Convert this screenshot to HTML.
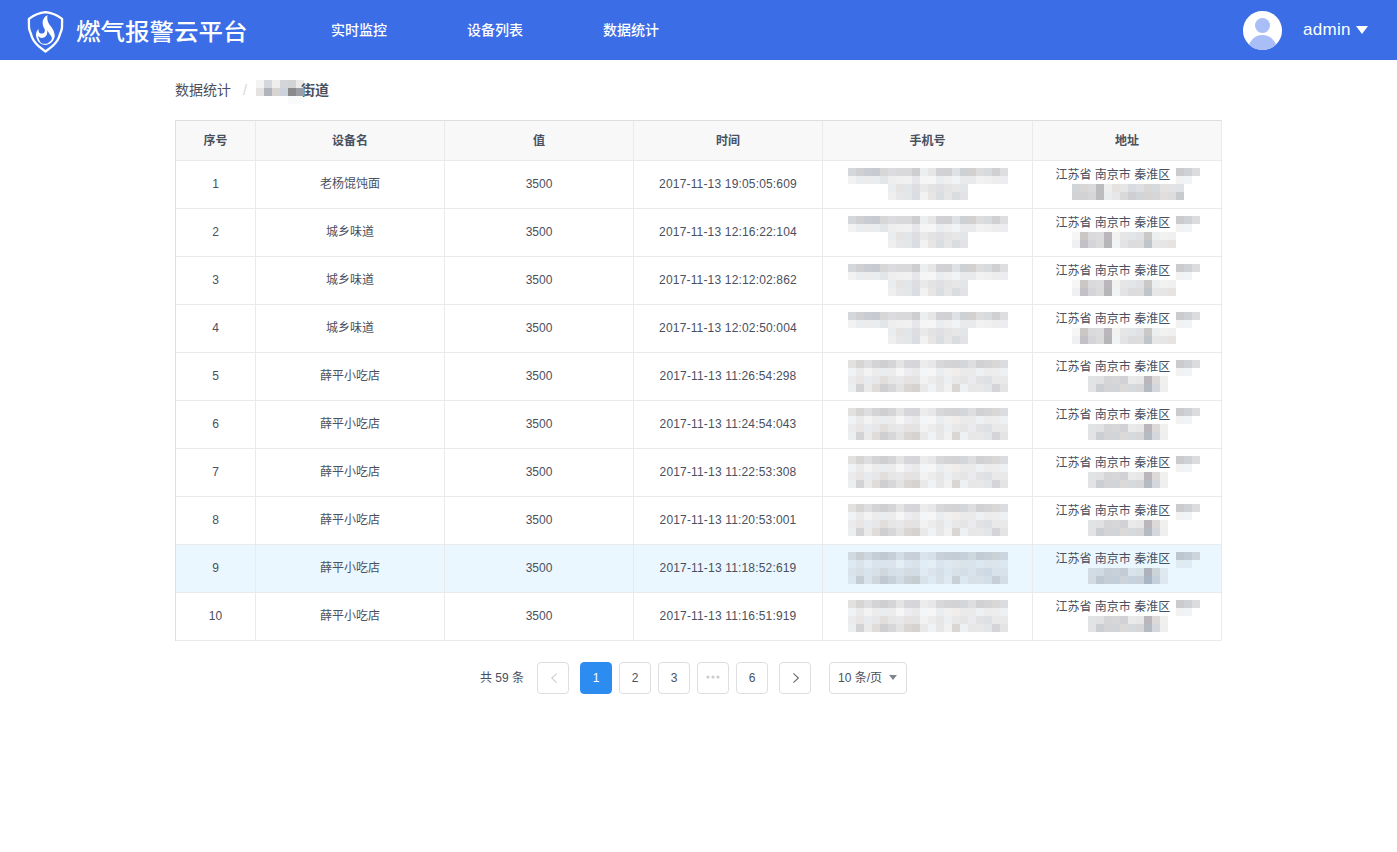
<!DOCTYPE html>
<html lang="zh-CN">
<head>
<meta charset="utf-8">
<title>燃气报警云平台</title>
<style>
*{box-sizing:border-box;margin:0;padding:0}
html,body{width:1397px;height:852px;overflow:hidden;background:#fff}
body{font-family:"Liberation Sans","Noto Sans CJK SC",sans-serif;font-size:12px;color:#495060;position:relative;-webkit-font-smoothing:antialiased}
.hd{position:absolute;left:0;top:0;width:1397px;height:60px;background:#3a6de6}
.logo{position:absolute;left:26px;top:9px;width:40px;height:46px}
.brand{position:absolute;left:76px;top:0;height:60px;line-height:64px;font-size:24.5px;color:#fff;letter-spacing:0;white-space:nowrap;font-weight:500;transform:scaleY(0.94);transform-origin:0 43px}
.nav{position:absolute;top:0;height:60px;line-height:60px;font-size:14px;color:#fff;white-space:nowrap;font-weight:500}
.avatar{position:absolute;left:1243px;top:11.3px;width:38.7px;height:38.5px;border-radius:50%;background:#fff;overflow:hidden}
.avatar i{position:absolute;display:block;background:#a9bdf6;border-radius:50%}
.user{position:absolute;left:1303px;top:0;height:60px;line-height:60px;font-size:17px;color:#fff;letter-spacing:0.3px}
.caret{position:absolute;left:1356px;top:26px;width:0;height:0;border-left:6px solid transparent;border-right:6px solid transparent;border-top:8px solid #fff}
.bc{position:absolute;left:175px;top:80px;height:21px;line-height:21px;font-size:14px;color:#495060;white-space:nowrap}
.bc .sep{color:#d4d6da;margin:0 7px 0 12px}
.bc b{font-weight:700}
.mosaic{position:absolute;left:0;top:0;pointer-events:none}
.mosaic rect{width:8px;height:8px}
.tb{position:absolute;left:175px;top:120px;width:1047px;height:521px;border:1px solid #dddee1;border-right:0;border-bottom:0}
table{border-collapse:separate;border-spacing:0;table-layout:fixed;width:1046px}
th,td{border-right:1px solid #e9eaec;border-bottom:1px solid #e9eaec;text-align:center;vertical-align:middle;font-size:12px;color:#495060;padding:0}
th{height:40px;background:#f8f8f9;font-weight:700;padding-bottom:2px}
td{height:48px;background:#fff;line-height:16px;position:relative;padding-bottom:2px}
tr.hv td{background:#ebf7ff}
.tm{letter-spacing:.17px}
.ad{position:absolute;left:22.5px;top:6px;white-space:nowrap;line-height:16px}
.pg{position:absolute;top:662px;height:32px;line-height:30px;font-size:12px;color:#495060;text-align:center}
.pi{border:1px solid #dddee1;border-radius:4px;background:#fff;width:32px}
.pi.on{background:#2d8cf0;border-color:#2d8cf0;color:#fff}
</style>
</head>
<body>
<div class="hd">
  <svg class="logo" viewBox="0 0 40 46">
    <path d="M19.5 3.2 Q10.6 4.1 2.9 9.8 C2.91 10.58 2.93 12.97 2.95 14.50 C2.98 16.03 2.91 17.75 3.05 19.00 C3.19 20.25 3.49 21.03 3.80 22.00 C4.11 22.97 4.55 23.82 4.90 24.80 C5.25 25.78 5.50 26.88 5.90 27.90 C6.30 28.92 6.72 29.93 7.30 30.90 C7.88 31.87 8.57 32.72 9.40 33.70 C10.23 34.68 11.20 35.77 12.30 36.80 C13.40 37.83 14.80 38.95 16.00 39.90 C17.20 40.85 18.92 42.07 19.50 42.50 C20.08 42.07 21.80 40.85 23.00 39.90 C24.20 38.95 25.60 37.83 26.70 36.80 C27.80 35.77 28.77 34.68 29.60 33.70 C30.43 32.72 31.12 31.87 31.70 30.90 C32.28 29.93 32.70 28.92 33.10 27.90 C33.50 26.88 33.75 25.78 34.10 24.80 C34.45 23.82 34.89 22.97 35.20 22.00 C35.51 21.03 35.81 20.25 35.95 19.00 C36.09 17.75 36.02 16.03 36.05 14.50 C36.07 12.97 36.09 10.58 36.10 9.80 Q28.4 4.1 19.5 3.2 Z" fill="none" stroke="#fff" stroke-width="2.3" stroke-linejoin="round"/>
    <path d="M21.5 6.1 C21.47 6.48 21.28 7.48 21.30 8.40 C21.32 9.32 21.33 10.55 21.60 11.60 C21.87 12.65 22.27 13.63 22.90 14.70 C23.53 15.77 24.67 16.90 25.40 18.00 C26.13 19.10 26.80 20.23 27.30 21.30 C27.80 22.37 28.17 23.35 28.40 24.40 C28.63 25.45 28.88 26.45 28.70 27.60 C28.52 28.75 28.07 30.17 27.30 31.30 C26.53 32.43 25.42 33.63 24.10 34.40 C22.78 35.17 20.92 35.83 19.40 35.90 C17.88 35.97 16.25 35.47 15.00 34.80 C13.75 34.13 12.68 33.02 11.90 31.90 C11.12 30.78 10.61 29.25 10.30 28.10 C9.99 26.95 9.97 25.98 10.05 25.00 C10.13 24.02 10.39 23.03 10.80 22.20 C11.21 21.37 12.22 20.37 12.50 20.00 C12.55 20.48 12.55 22.18 12.80 22.90 C13.05 23.62 13.53 24.02 14.00 24.30 C14.47 24.58 15.05 24.62 15.60 24.60 C16.15 24.58 16.82 24.48 17.30 24.20 C17.78 23.92 18.23 23.38 18.50 22.90 C18.77 22.42 18.92 21.87 18.90 21.30 C18.88 20.73 18.63 20.07 18.40 19.50 C18.17 18.93 17.78 18.70 17.50 17.90 C17.22 17.10 16.80 15.75 16.70 14.70 C16.60 13.65 16.60 12.65 16.90 11.60 C17.20 10.55 17.73 9.32 18.50 8.40 C19.27 7.48 21.00 6.48 21.50 6.10 Z M12.2 27 C12.45 27.22 13.13 27.98 13.70 28.30 C14.27 28.62 14.80 28.92 15.60 28.90 C16.40 28.88 17.65 28.73 18.50 28.20 C19.35 27.67 20.23 26.60 20.70 25.70 C21.17 24.80 21.20 23.55 21.30 22.80 C21.40 22.05 21.30 21.47 21.30 21.20 C21.62 21.73 22.52 23.33 23.20 24.40 C23.88 25.47 25.00 26.58 25.40 27.60 C25.80 28.62 26.15 29.43 25.60 30.50 C25.05 31.57 23.18 33.27 22.10 34.00 C21.02 34.73 20.22 34.85 19.10 34.85 C17.98 34.85 16.35 34.59 15.40 34.00 C14.45 33.41 13.92 32.28 13.40 31.30 C12.88 30.32 12.50 28.82 12.30 28.10 C12.10 27.38 12.22 27.18 12.20 27.00 Z" fill="#fff" fill-rule="evenodd"/>
  </svg>
  <div class="brand">燃气报警云平台</div>
  <div class="nav" style="left:331px">实时监控</div>
  <div class="nav" style="left:467px">设备列表</div>
  <div class="nav" style="left:603px">数据统计</div>
  <div class="avatar"><i style="left:12px;top:6.8px;width:15px;height:15px"></i><i style="left:5px;top:24px;width:29px;height:30px"></i></div>
  <div class="user">admin</div>
  <div class="caret"></div>
</div>

<div class="bc"><span>数据统计</span><span class="sep">/</span><span style="display:inline-block;width:47px"></span><b>街道</b></div>

<div class="tb">
<table>
<colgroup><col style="width:80px"><col style="width:189px"><col style="width:189px"><col style="width:189px"><col style="width:210px"><col style="width:189px"></colgroup>
<thead><tr><th>序号</th><th>设备名</th><th>值</th><th>时间</th><th>手机号</th><th>地址</th></tr></thead>
<tbody>
<tr><td>1</td><td>老杨馄饨面</td><td>3500</td><td class="tm">2017-11-13 19:05:05:609</td><td></td><td><span class="ad">江苏省 南京市 秦淮区</span></td></tr>
<tr><td>2</td><td>城乡味道</td><td>3500</td><td class="tm">2017-11-13 12:16:22:104</td><td></td><td><span class="ad">江苏省 南京市 秦淮区</span></td></tr>
<tr><td>3</td><td>城乡味道</td><td>3500</td><td class="tm">2017-11-13 12:12:02:862</td><td></td><td><span class="ad">江苏省 南京市 秦淮区</span></td></tr>
<tr><td>4</td><td>城乡味道</td><td>3500</td><td class="tm">2017-11-13 12:02:50:004</td><td></td><td><span class="ad">江苏省 南京市 秦淮区</span></td></tr>
<tr><td>5</td><td>薛平小吃店</td><td>3500</td><td class="tm">2017-11-13 11:26:54:298</td><td></td><td><span class="ad">江苏省 南京市 秦淮区</span></td></tr>
<tr><td>6</td><td>薛平小吃店</td><td>3500</td><td class="tm">2017-11-13 11:24:54:043</td><td></td><td><span class="ad">江苏省 南京市 秦淮区</span></td></tr>
<tr><td>7</td><td>薛平小吃店</td><td>3500</td><td class="tm">2017-11-13 11:22:53:308</td><td></td><td><span class="ad">江苏省 南京市 秦淮区</span></td></tr>
<tr><td>8</td><td>薛平小吃店</td><td>3500</td><td class="tm">2017-11-13 11:20:53:001</td><td></td><td><span class="ad">江苏省 南京市 秦淮区</span></td></tr>
<tr class="hv"><td>9</td><td>薛平小吃店</td><td>3500</td><td class="tm">2017-11-13 11:18:52:619</td><td></td><td><span class="ad">江苏省 南京市 秦淮区</span></td></tr>
<tr><td>10</td><td>薛平小吃店</td><td>3500</td><td class="tm">2017-11-13 11:16:51:919</td><td></td><td><span class="ad">江苏省 南京市 秦淮区</span></td></tr>
</tbody>
</table>
</div>

<svg class="mosaic" width="1397" height="852" viewBox="0 0 1397 852" fill="rgb(70,75,92)" shape-rendering="crispEdges"><rect x="848" y="168" fill="#465468" fill-opacity=".23"/><rect x="856" y="168" fill="#505058" fill-opacity=".27"/><rect x="864" y="168" fill="#465468" fill-opacity=".29"/><rect x="872" y="168" fill="#465468" fill-opacity=".30"/><rect x="880" y="168" fill="#505058" fill-opacity=".23"/><rect x="888" y="168" fill="#505058" fill-opacity=".20"/><rect x="896" y="168" fill="#54545c" fill-opacity=".22"/><rect x="904" y="168" fill="#54545c" fill-opacity=".22"/><rect x="912" y="168" fill="#505058" fill-opacity=".28"/><rect x="920" y="168" fill="#465468" fill-opacity=".10"/><rect x="928" y="168" fill="#585460" fill-opacity=".15"/><rect x="936" y="168" fill="#505058" fill-opacity=".26"/><rect x="944" y="168" fill="#54545c" fill-opacity=".27"/><rect x="952" y="168" fill="#4a4f5e" fill-opacity=".17"/><rect x="960" y="168" fill="#465468" fill-opacity=".27"/><rect x="968" y="168" fill="#5e5652" fill-opacity=".27"/><rect x="976" y="168" fill="#54545c" fill-opacity=".20"/><rect x="984" y="168" fill="#4a4f5e" fill-opacity=".21"/><rect x="992" y="168" fill="#505058" fill-opacity=".27"/><rect x="1000" y="168" fill="#585460" fill-opacity=".20"/><rect x="848" y="176" fill="#585460" fill-opacity=".08"/><rect x="856" y="176" fill="#4a4f5e" fill-opacity=".11"/><rect x="864" y="176" fill="#505058" fill-opacity=".11"/><rect x="872" y="176" fill="#465468" fill-opacity=".11"/><rect x="880" y="176" fill="#465468" fill-opacity=".15"/><rect x="888" y="176" fill="#585460" fill-opacity=".10"/><rect x="896" y="176" fill="#585460" fill-opacity=".09"/><rect x="904" y="176" fill="#505058" fill-opacity=".08"/><rect x="912" y="176" fill="#585460" fill-opacity=".14"/><rect x="920" y="176" fill="#54545c" fill-opacity=".06"/><rect x="928" y="176" fill="#505058" fill-opacity=".05"/><rect x="936" y="176" fill="#4a4f5e" fill-opacity=".11"/><rect x="944" y="176" fill="#505058" fill-opacity=".09"/><rect x="952" y="176" fill="#4a4f5e" fill-opacity=".07"/><rect x="960" y="176" fill="#4a4f5e" fill-opacity=".12"/><rect x="968" y="176" fill="#4a4f5e" fill-opacity=".12"/><rect x="976" y="176" fill="#54545c" fill-opacity=".08"/><rect x="984" y="176" fill="#54545c" fill-opacity=".09"/><rect x="992" y="176" fill="#505058" fill-opacity=".10"/><rect x="1000" y="176" fill="#4a4f5e" fill-opacity=".10"/><rect x="888" y="184" fill="#465468" fill-opacity=".11"/><rect x="896" y="184" fill="#5e5652" fill-opacity=".16"/><rect x="904" y="184" fill="#465468" fill-opacity=".15"/><rect x="912" y="184" fill="#505058" fill-opacity=".19"/><rect x="920" y="184" fill="#54545c" fill-opacity=".13"/><rect x="928" y="184" fill="#505058" fill-opacity=".16"/><rect x="936" y="184" fill="#54545c" fill-opacity=".18"/><rect x="944" y="184" fill="#585460" fill-opacity=".16"/><rect x="952" y="184" fill="#5e5652" fill-opacity=".14"/><rect x="960" y="184" fill="#465468" fill-opacity=".15"/><rect x="888" y="192" fill="#4a4f5e" fill-opacity=".09"/><rect x="896" y="192" fill="#585460" fill-opacity=".14"/><rect x="904" y="192" fill="#4a4f5e" fill-opacity=".14"/><rect x="912" y="192" fill="#465468" fill-opacity=".20"/><rect x="920" y="192" fill="#585460" fill-opacity=".08"/><rect x="928" y="192" fill="#5e5652" fill-opacity=".15"/><rect x="936" y="192" fill="#465468" fill-opacity=".20"/><rect x="944" y="192" fill="#505058" fill-opacity=".14"/><rect x="952" y="192" fill="#4a4f5e" fill-opacity=".20"/><rect x="960" y="192" fill="#585460" fill-opacity=".17"/><rect x="1072" y="184" fill="#465468" fill-opacity=".25"/><rect x="1080" y="184" fill="#5e5652" fill-opacity=".24"/><rect x="1088" y="184" fill="#585460" fill-opacity=".22"/><rect x="1096" y="184" fill="#505058" fill-opacity=".38"/><rect x="1104" y="184" fill="#585460" fill-opacity=".10"/><rect x="1112" y="184" fill="#5e5652" fill-opacity=".17"/><rect x="1120" y="184" fill="#54545c" fill-opacity=".15"/><rect x="1128" y="184" fill="#465468" fill-opacity=".21"/><rect x="1136" y="184" fill="#4a4f5e" fill-opacity=".18"/><rect x="1144" y="184" fill="#5e5652" fill-opacity=".23"/><rect x="1152" y="184" fill="#465468" fill-opacity=".22"/><rect x="1160" y="184" fill="#5e5652" fill-opacity=".17"/><rect x="1168" y="184" fill="#585460" fill-opacity=".17"/><rect x="1176" y="184" fill="#465468" fill-opacity=".17"/><rect x="1072" y="192" fill="#585460" fill-opacity=".27"/><rect x="1080" y="192" fill="#505058" fill-opacity=".26"/><rect x="1088" y="192" fill="#54545c" fill-opacity=".24"/><rect x="1096" y="192" fill="#505058" fill-opacity=".38"/><rect x="1104" y="192" fill="#4a4f5e" fill-opacity=".11"/><rect x="1112" y="192" fill="#585460" fill-opacity=".14"/><rect x="1120" y="192" fill="#505058" fill-opacity=".22"/><rect x="1128" y="192" fill="#54545c" fill-opacity=".28"/><rect x="1136" y="192" fill="#465468" fill-opacity=".25"/><rect x="1144" y="192" fill="#5e5652" fill-opacity=".25"/><rect x="1152" y="192" fill="#54545c" fill-opacity=".24"/><rect x="1160" y="192" fill="#5e5652" fill-opacity=".19"/><rect x="1168" y="192" fill="#54545c" fill-opacity=".20"/><rect x="1176" y="192" fill="#4a4f5e" fill-opacity=".30"/><rect x="1176" y="168" fill="#54545c" fill-opacity=".30"/><rect x="1184" y="168" fill="#4a4f5e" fill-opacity=".26"/><rect x="1192" y="168" fill="#505058" fill-opacity=".20"/><rect x="1176" y="176" fill="#585460" fill-opacity=".08"/><rect x="1184" y="176" fill="#4a4f5e" fill-opacity=".07"/><rect x="848" y="216" fill="#465468" fill-opacity=".23"/><rect x="856" y="216" fill="#505058" fill-opacity=".27"/><rect x="864" y="216" fill="#465468" fill-opacity=".29"/><rect x="872" y="216" fill="#465468" fill-opacity=".30"/><rect x="880" y="216" fill="#505058" fill-opacity=".23"/><rect x="888" y="216" fill="#505058" fill-opacity=".20"/><rect x="896" y="216" fill="#54545c" fill-opacity=".22"/><rect x="904" y="216" fill="#54545c" fill-opacity=".22"/><rect x="912" y="216" fill="#505058" fill-opacity=".28"/><rect x="920" y="216" fill="#465468" fill-opacity=".10"/><rect x="928" y="216" fill="#585460" fill-opacity=".15"/><rect x="936" y="216" fill="#505058" fill-opacity=".26"/><rect x="944" y="216" fill="#54545c" fill-opacity=".27"/><rect x="952" y="216" fill="#4a4f5e" fill-opacity=".17"/><rect x="960" y="216" fill="#465468" fill-opacity=".27"/><rect x="968" y="216" fill="#5e5652" fill-opacity=".27"/><rect x="976" y="216" fill="#54545c" fill-opacity=".20"/><rect x="984" y="216" fill="#4a4f5e" fill-opacity=".21"/><rect x="992" y="216" fill="#505058" fill-opacity=".27"/><rect x="1000" y="216" fill="#585460" fill-opacity=".20"/><rect x="848" y="224" fill="#585460" fill-opacity=".08"/><rect x="856" y="224" fill="#4a4f5e" fill-opacity=".11"/><rect x="864" y="224" fill="#505058" fill-opacity=".11"/><rect x="872" y="224" fill="#465468" fill-opacity=".11"/><rect x="880" y="224" fill="#465468" fill-opacity=".15"/><rect x="888" y="224" fill="#585460" fill-opacity=".10"/><rect x="896" y="224" fill="#585460" fill-opacity=".09"/><rect x="904" y="224" fill="#505058" fill-opacity=".08"/><rect x="912" y="224" fill="#585460" fill-opacity=".14"/><rect x="920" y="224" fill="#54545c" fill-opacity=".06"/><rect x="928" y="224" fill="#505058" fill-opacity=".05"/><rect x="936" y="224" fill="#4a4f5e" fill-opacity=".11"/><rect x="944" y="224" fill="#505058" fill-opacity=".09"/><rect x="952" y="224" fill="#4a4f5e" fill-opacity=".07"/><rect x="960" y="224" fill="#4a4f5e" fill-opacity=".12"/><rect x="968" y="224" fill="#4a4f5e" fill-opacity=".12"/><rect x="976" y="224" fill="#54545c" fill-opacity=".08"/><rect x="984" y="224" fill="#54545c" fill-opacity=".09"/><rect x="992" y="224" fill="#505058" fill-opacity=".10"/><rect x="1000" y="224" fill="#4a4f5e" fill-opacity=".10"/><rect x="888" y="232" fill="#465468" fill-opacity=".11"/><rect x="896" y="232" fill="#5e5652" fill-opacity=".16"/><rect x="904" y="232" fill="#465468" fill-opacity=".15"/><rect x="912" y="232" fill="#505058" fill-opacity=".19"/><rect x="920" y="232" fill="#54545c" fill-opacity=".13"/><rect x="928" y="232" fill="#505058" fill-opacity=".16"/><rect x="936" y="232" fill="#54545c" fill-opacity=".18"/><rect x="944" y="232" fill="#585460" fill-opacity=".16"/><rect x="952" y="232" fill="#5e5652" fill-opacity=".14"/><rect x="960" y="232" fill="#465468" fill-opacity=".15"/><rect x="888" y="240" fill="#4a4f5e" fill-opacity=".09"/><rect x="896" y="240" fill="#585460" fill-opacity=".14"/><rect x="904" y="240" fill="#4a4f5e" fill-opacity=".14"/><rect x="912" y="240" fill="#465468" fill-opacity=".20"/><rect x="920" y="240" fill="#585460" fill-opacity=".08"/><rect x="928" y="240" fill="#5e5652" fill-opacity=".15"/><rect x="936" y="240" fill="#465468" fill-opacity=".20"/><rect x="944" y="240" fill="#505058" fill-opacity=".14"/><rect x="952" y="240" fill="#4a4f5e" fill-opacity=".20"/><rect x="960" y="240" fill="#585460" fill-opacity=".17"/><rect x="1072" y="232" fill="#465468" fill-opacity=".05"/><rect x="1080" y="232" fill="#5e5652" fill-opacity=".33"/><rect x="1088" y="232" fill="#585460" fill-opacity=".22"/><rect x="1096" y="232" fill="#505058" fill-opacity=".20"/><rect x="1104" y="232" fill="#585460" fill-opacity=".42"/><rect x="1112" y="232" fill="#5e5652" fill-opacity=".08"/><rect x="1120" y="232" fill="#54545c" fill-opacity=".15"/><rect x="1128" y="232" fill="#465468" fill-opacity=".15"/><rect x="1136" y="232" fill="#4a4f5e" fill-opacity=".17"/><rect x="1144" y="232" fill="#5e5652" fill-opacity=".32"/><rect x="1152" y="232" fill="#465468" fill-opacity=".10"/><rect x="1160" y="232" fill="#5e5652" fill-opacity=".08"/><rect x="1168" y="232" fill="#585460" fill-opacity=".09"/><rect x="1072" y="240" fill="#465468" fill-opacity=".09"/><rect x="1080" y="240" fill="#585460" fill-opacity=".36"/><rect x="1088" y="240" fill="#505058" fill-opacity=".24"/><rect x="1096" y="240" fill="#54545c" fill-opacity=".21"/><rect x="1104" y="240" fill="#505058" fill-opacity=".42"/><rect x="1112" y="240" fill="#4a4f5e" fill-opacity=".07"/><rect x="1120" y="240" fill="#585460" fill-opacity=".17"/><rect x="1128" y="240" fill="#505058" fill-opacity=".20"/><rect x="1136" y="240" fill="#54545c" fill-opacity=".20"/><rect x="1144" y="240" fill="#465468" fill-opacity=".34"/><rect x="1152" y="240" fill="#5e5652" fill-opacity=".14"/><rect x="1160" y="240" fill="#54545c" fill-opacity=".15"/><rect x="1168" y="240" fill="#5e5652" fill-opacity=".16"/><rect x="1176" y="216" fill="#54545c" fill-opacity=".30"/><rect x="1184" y="216" fill="#4a4f5e" fill-opacity=".26"/><rect x="1192" y="216" fill="#505058" fill-opacity=".20"/><rect x="1176" y="224" fill="#585460" fill-opacity=".08"/><rect x="1184" y="224" fill="#4a4f5e" fill-opacity=".07"/><rect x="848" y="264" fill="#465468" fill-opacity=".23"/><rect x="856" y="264" fill="#505058" fill-opacity=".27"/><rect x="864" y="264" fill="#465468" fill-opacity=".29"/><rect x="872" y="264" fill="#465468" fill-opacity=".30"/><rect x="880" y="264" fill="#505058" fill-opacity=".23"/><rect x="888" y="264" fill="#505058" fill-opacity=".20"/><rect x="896" y="264" fill="#54545c" fill-opacity=".22"/><rect x="904" y="264" fill="#54545c" fill-opacity=".22"/><rect x="912" y="264" fill="#505058" fill-opacity=".28"/><rect x="920" y="264" fill="#465468" fill-opacity=".10"/><rect x="928" y="264" fill="#585460" fill-opacity=".15"/><rect x="936" y="264" fill="#505058" fill-opacity=".26"/><rect x="944" y="264" fill="#54545c" fill-opacity=".27"/><rect x="952" y="264" fill="#4a4f5e" fill-opacity=".17"/><rect x="960" y="264" fill="#465468" fill-opacity=".27"/><rect x="968" y="264" fill="#5e5652" fill-opacity=".27"/><rect x="976" y="264" fill="#54545c" fill-opacity=".20"/><rect x="984" y="264" fill="#4a4f5e" fill-opacity=".21"/><rect x="992" y="264" fill="#505058" fill-opacity=".27"/><rect x="1000" y="264" fill="#585460" fill-opacity=".20"/><rect x="848" y="272" fill="#585460" fill-opacity=".08"/><rect x="856" y="272" fill="#4a4f5e" fill-opacity=".11"/><rect x="864" y="272" fill="#505058" fill-opacity=".11"/><rect x="872" y="272" fill="#465468" fill-opacity=".11"/><rect x="880" y="272" fill="#465468" fill-opacity=".15"/><rect x="888" y="272" fill="#585460" fill-opacity=".10"/><rect x="896" y="272" fill="#585460" fill-opacity=".09"/><rect x="904" y="272" fill="#505058" fill-opacity=".08"/><rect x="912" y="272" fill="#585460" fill-opacity=".14"/><rect x="920" y="272" fill="#54545c" fill-opacity=".06"/><rect x="928" y="272" fill="#505058" fill-opacity=".05"/><rect x="936" y="272" fill="#4a4f5e" fill-opacity=".11"/><rect x="944" y="272" fill="#505058" fill-opacity=".09"/><rect x="952" y="272" fill="#4a4f5e" fill-opacity=".07"/><rect x="960" y="272" fill="#4a4f5e" fill-opacity=".12"/><rect x="968" y="272" fill="#4a4f5e" fill-opacity=".12"/><rect x="976" y="272" fill="#54545c" fill-opacity=".08"/><rect x="984" y="272" fill="#54545c" fill-opacity=".09"/><rect x="992" y="272" fill="#505058" fill-opacity=".10"/><rect x="1000" y="272" fill="#4a4f5e" fill-opacity=".10"/><rect x="888" y="280" fill="#465468" fill-opacity=".11"/><rect x="896" y="280" fill="#5e5652" fill-opacity=".16"/><rect x="904" y="280" fill="#465468" fill-opacity=".15"/><rect x="912" y="280" fill="#505058" fill-opacity=".19"/><rect x="920" y="280" fill="#54545c" fill-opacity=".13"/><rect x="928" y="280" fill="#505058" fill-opacity=".16"/><rect x="936" y="280" fill="#54545c" fill-opacity=".18"/><rect x="944" y="280" fill="#585460" fill-opacity=".16"/><rect x="952" y="280" fill="#5e5652" fill-opacity=".14"/><rect x="960" y="280" fill="#465468" fill-opacity=".15"/><rect x="888" y="288" fill="#4a4f5e" fill-opacity=".09"/><rect x="896" y="288" fill="#585460" fill-opacity=".14"/><rect x="904" y="288" fill="#4a4f5e" fill-opacity=".14"/><rect x="912" y="288" fill="#465468" fill-opacity=".20"/><rect x="920" y="288" fill="#585460" fill-opacity=".08"/><rect x="928" y="288" fill="#5e5652" fill-opacity=".15"/><rect x="936" y="288" fill="#465468" fill-opacity=".20"/><rect x="944" y="288" fill="#505058" fill-opacity=".14"/><rect x="952" y="288" fill="#4a4f5e" fill-opacity=".20"/><rect x="960" y="288" fill="#585460" fill-opacity=".17"/><rect x="1072" y="280" fill="#465468" fill-opacity=".05"/><rect x="1080" y="280" fill="#5e5652" fill-opacity=".33"/><rect x="1088" y="280" fill="#585460" fill-opacity=".22"/><rect x="1096" y="280" fill="#505058" fill-opacity=".20"/><rect x="1104" y="280" fill="#585460" fill-opacity=".42"/><rect x="1112" y="280" fill="#5e5652" fill-opacity=".08"/><rect x="1120" y="280" fill="#54545c" fill-opacity=".15"/><rect x="1128" y="280" fill="#465468" fill-opacity=".15"/><rect x="1136" y="280" fill="#4a4f5e" fill-opacity=".17"/><rect x="1144" y="280" fill="#5e5652" fill-opacity=".32"/><rect x="1152" y="280" fill="#465468" fill-opacity=".10"/><rect x="1160" y="280" fill="#5e5652" fill-opacity=".08"/><rect x="1168" y="280" fill="#585460" fill-opacity=".09"/><rect x="1072" y="288" fill="#465468" fill-opacity=".09"/><rect x="1080" y="288" fill="#585460" fill-opacity=".36"/><rect x="1088" y="288" fill="#505058" fill-opacity=".24"/><rect x="1096" y="288" fill="#54545c" fill-opacity=".21"/><rect x="1104" y="288" fill="#505058" fill-opacity=".42"/><rect x="1112" y="288" fill="#4a4f5e" fill-opacity=".07"/><rect x="1120" y="288" fill="#585460" fill-opacity=".17"/><rect x="1128" y="288" fill="#505058" fill-opacity=".20"/><rect x="1136" y="288" fill="#54545c" fill-opacity=".20"/><rect x="1144" y="288" fill="#465468" fill-opacity=".34"/><rect x="1152" y="288" fill="#5e5652" fill-opacity=".14"/><rect x="1160" y="288" fill="#54545c" fill-opacity=".15"/><rect x="1168" y="288" fill="#5e5652" fill-opacity=".16"/><rect x="1176" y="264" fill="#54545c" fill-opacity=".30"/><rect x="1184" y="264" fill="#4a4f5e" fill-opacity=".26"/><rect x="1192" y="264" fill="#505058" fill-opacity=".20"/><rect x="1176" y="272" fill="#585460" fill-opacity=".08"/><rect x="1184" y="272" fill="#4a4f5e" fill-opacity=".07"/><rect x="848" y="312" fill="#465468" fill-opacity=".23"/><rect x="856" y="312" fill="#505058" fill-opacity=".27"/><rect x="864" y="312" fill="#465468" fill-opacity=".29"/><rect x="872" y="312" fill="#465468" fill-opacity=".30"/><rect x="880" y="312" fill="#505058" fill-opacity=".23"/><rect x="888" y="312" fill="#505058" fill-opacity=".20"/><rect x="896" y="312" fill="#54545c" fill-opacity=".22"/><rect x="904" y="312" fill="#54545c" fill-opacity=".22"/><rect x="912" y="312" fill="#505058" fill-opacity=".28"/><rect x="920" y="312" fill="#465468" fill-opacity=".10"/><rect x="928" y="312" fill="#585460" fill-opacity=".15"/><rect x="936" y="312" fill="#505058" fill-opacity=".26"/><rect x="944" y="312" fill="#54545c" fill-opacity=".27"/><rect x="952" y="312" fill="#4a4f5e" fill-opacity=".17"/><rect x="960" y="312" fill="#465468" fill-opacity=".27"/><rect x="968" y="312" fill="#5e5652" fill-opacity=".27"/><rect x="976" y="312" fill="#54545c" fill-opacity=".20"/><rect x="984" y="312" fill="#4a4f5e" fill-opacity=".21"/><rect x="992" y="312" fill="#505058" fill-opacity=".27"/><rect x="1000" y="312" fill="#585460" fill-opacity=".20"/><rect x="848" y="320" fill="#585460" fill-opacity=".08"/><rect x="856" y="320" fill="#4a4f5e" fill-opacity=".11"/><rect x="864" y="320" fill="#505058" fill-opacity=".11"/><rect x="872" y="320" fill="#465468" fill-opacity=".11"/><rect x="880" y="320" fill="#465468" fill-opacity=".15"/><rect x="888" y="320" fill="#585460" fill-opacity=".10"/><rect x="896" y="320" fill="#585460" fill-opacity=".09"/><rect x="904" y="320" fill="#505058" fill-opacity=".08"/><rect x="912" y="320" fill="#585460" fill-opacity=".14"/><rect x="920" y="320" fill="#54545c" fill-opacity=".06"/><rect x="928" y="320" fill="#505058" fill-opacity=".05"/><rect x="936" y="320" fill="#4a4f5e" fill-opacity=".11"/><rect x="944" y="320" fill="#505058" fill-opacity=".09"/><rect x="952" y="320" fill="#4a4f5e" fill-opacity=".07"/><rect x="960" y="320" fill="#4a4f5e" fill-opacity=".12"/><rect x="968" y="320" fill="#4a4f5e" fill-opacity=".12"/><rect x="976" y="320" fill="#54545c" fill-opacity=".08"/><rect x="984" y="320" fill="#54545c" fill-opacity=".09"/><rect x="992" y="320" fill="#505058" fill-opacity=".10"/><rect x="1000" y="320" fill="#4a4f5e" fill-opacity=".10"/><rect x="888" y="328" fill="#465468" fill-opacity=".11"/><rect x="896" y="328" fill="#5e5652" fill-opacity=".16"/><rect x="904" y="328" fill="#465468" fill-opacity=".15"/><rect x="912" y="328" fill="#505058" fill-opacity=".19"/><rect x="920" y="328" fill="#54545c" fill-opacity=".13"/><rect x="928" y="328" fill="#505058" fill-opacity=".16"/><rect x="936" y="328" fill="#54545c" fill-opacity=".18"/><rect x="944" y="328" fill="#585460" fill-opacity=".16"/><rect x="952" y="328" fill="#5e5652" fill-opacity=".14"/><rect x="960" y="328" fill="#465468" fill-opacity=".15"/><rect x="888" y="336" fill="#4a4f5e" fill-opacity=".09"/><rect x="896" y="336" fill="#585460" fill-opacity=".14"/><rect x="904" y="336" fill="#4a4f5e" fill-opacity=".14"/><rect x="912" y="336" fill="#465468" fill-opacity=".20"/><rect x="920" y="336" fill="#585460" fill-opacity=".08"/><rect x="928" y="336" fill="#5e5652" fill-opacity=".15"/><rect x="936" y="336" fill="#465468" fill-opacity=".20"/><rect x="944" y="336" fill="#505058" fill-opacity=".14"/><rect x="952" y="336" fill="#4a4f5e" fill-opacity=".20"/><rect x="960" y="336" fill="#585460" fill-opacity=".17"/><rect x="1072" y="328" fill="#465468" fill-opacity=".05"/><rect x="1080" y="328" fill="#5e5652" fill-opacity=".33"/><rect x="1088" y="328" fill="#585460" fill-opacity=".22"/><rect x="1096" y="328" fill="#505058" fill-opacity=".20"/><rect x="1104" y="328" fill="#585460" fill-opacity=".42"/><rect x="1112" y="328" fill="#5e5652" fill-opacity=".08"/><rect x="1120" y="328" fill="#54545c" fill-opacity=".15"/><rect x="1128" y="328" fill="#465468" fill-opacity=".15"/><rect x="1136" y="328" fill="#4a4f5e" fill-opacity=".17"/><rect x="1144" y="328" fill="#5e5652" fill-opacity=".32"/><rect x="1152" y="328" fill="#465468" fill-opacity=".10"/><rect x="1160" y="328" fill="#5e5652" fill-opacity=".08"/><rect x="1168" y="328" fill="#585460" fill-opacity=".09"/><rect x="1072" y="336" fill="#465468" fill-opacity=".09"/><rect x="1080" y="336" fill="#585460" fill-opacity=".36"/><rect x="1088" y="336" fill="#505058" fill-opacity=".24"/><rect x="1096" y="336" fill="#54545c" fill-opacity=".21"/><rect x="1104" y="336" fill="#505058" fill-opacity=".42"/><rect x="1112" y="336" fill="#4a4f5e" fill-opacity=".07"/><rect x="1120" y="336" fill="#585460" fill-opacity=".17"/><rect x="1128" y="336" fill="#505058" fill-opacity=".20"/><rect x="1136" y="336" fill="#54545c" fill-opacity=".20"/><rect x="1144" y="336" fill="#465468" fill-opacity=".34"/><rect x="1152" y="336" fill="#5e5652" fill-opacity=".14"/><rect x="1160" y="336" fill="#54545c" fill-opacity=".15"/><rect x="1168" y="336" fill="#5e5652" fill-opacity=".16"/><rect x="1176" y="312" fill="#54545c" fill-opacity=".30"/><rect x="1184" y="312" fill="#4a4f5e" fill-opacity=".26"/><rect x="1192" y="312" fill="#505058" fill-opacity=".20"/><rect x="1176" y="320" fill="#585460" fill-opacity=".08"/><rect x="1184" y="320" fill="#4a4f5e" fill-opacity=".07"/><rect x="848" y="360" fill="#5e5652" fill-opacity=".18"/><rect x="856" y="360" fill="#5e5652" fill-opacity=".25"/><rect x="864" y="360" fill="#585460" fill-opacity=".20"/><rect x="872" y="360" fill="#585460" fill-opacity=".26"/><rect x="880" y="360" fill="#54545c" fill-opacity=".28"/><rect x="888" y="360" fill="#585460" fill-opacity=".25"/><rect x="896" y="360" fill="#54545c" fill-opacity=".16"/><rect x="904" y="360" fill="#585460" fill-opacity=".24"/><rect x="912" y="360" fill="#54545c" fill-opacity=".24"/><rect x="920" y="360" fill="#54545c" fill-opacity=".11"/><rect x="928" y="360" fill="#585460" fill-opacity=".14"/><rect x="936" y="360" fill="#585460" fill-opacity=".23"/><rect x="944" y="360" fill="#54545c" fill-opacity=".25"/><rect x="952" y="360" fill="#54545c" fill-opacity=".26"/><rect x="960" y="360" fill="#4a4f5e" fill-opacity=".23"/><rect x="968" y="360" fill="#505058" fill-opacity=".19"/><rect x="976" y="360" fill="#54545c" fill-opacity=".27"/><rect x="984" y="360" fill="#585460" fill-opacity=".26"/><rect x="992" y="360" fill="#5e5652" fill-opacity=".23"/><rect x="1000" y="360" fill="#4a4f5e" fill-opacity=".20"/><rect x="848" y="368" fill="#465468" fill-opacity=".08"/><rect x="856" y="368" fill="#54545c" fill-opacity=".12"/><rect x="864" y="368" fill="#585460" fill-opacity=".07"/><rect x="872" y="368" fill="#505058" fill-opacity=".11"/><rect x="880" y="368" fill="#4a4f5e" fill-opacity=".11"/><rect x="888" y="368" fill="#5e5652" fill-opacity=".11"/><rect x="896" y="368" fill="#54545c" fill-opacity=".05"/><rect x="904" y="368" fill="#4a4f5e" fill-opacity=".10"/><rect x="912" y="368" fill="#5e5652" fill-opacity=".13"/><rect x="920" y="368" fill="#465468" fill-opacity=".06"/><rect x="928" y="368" fill="#585460" fill-opacity=".05"/><rect x="936" y="368" fill="#465468" fill-opacity=".11"/><rect x="944" y="368" fill="#54545c" fill-opacity=".09"/><rect x="952" y="368" fill="#5e5652" fill-opacity=".10"/><rect x="960" y="368" fill="#5e5652" fill-opacity=".12"/><rect x="968" y="368" fill="#54545c" fill-opacity=".12"/><rect x="976" y="368" fill="#465468" fill-opacity=".09"/><rect x="984" y="368" fill="#505058" fill-opacity=".11"/><rect x="992" y="368" fill="#505058" fill-opacity=".10"/><rect x="1000" y="368" fill="#465468" fill-opacity=".09"/><rect x="848" y="376" fill="#585460" fill-opacity=".12"/><rect x="856" y="376" fill="#5e5652" fill-opacity=".15"/><rect x="864" y="376" fill="#465468" fill-opacity=".12"/><rect x="872" y="376" fill="#585460" fill-opacity=".14"/><rect x="880" y="376" fill="#5e5652" fill-opacity=".19"/><rect x="888" y="376" fill="#585460" fill-opacity=".15"/><rect x="896" y="376" fill="#4a4f5e" fill-opacity=".13"/><rect x="904" y="376" fill="#5e5652" fill-opacity=".17"/><rect x="912" y="376" fill="#505058" fill-opacity=".16"/><rect x="920" y="376" fill="#585460" fill-opacity=".08"/><rect x="928" y="376" fill="#5e5652" fill-opacity=".11"/><rect x="936" y="376" fill="#585460" fill-opacity=".15"/><rect x="944" y="376" fill="#465468" fill-opacity=".10"/><rect x="952" y="376" fill="#505058" fill-opacity=".13"/><rect x="960" y="376" fill="#505058" fill-opacity=".15"/><rect x="968" y="376" fill="#585460" fill-opacity=".12"/><rect x="976" y="376" fill="#54545c" fill-opacity=".17"/><rect x="984" y="376" fill="#465468" fill-opacity=".18"/><rect x="992" y="376" fill="#585460" fill-opacity=".13"/><rect x="1000" y="376" fill="#585460" fill-opacity=".13"/><rect x="848" y="384" fill="#465468" fill-opacity=".10"/><rect x="856" y="384" fill="#505058" fill-opacity=".25"/><rect x="864" y="384" fill="#54545c" fill-opacity=".12"/><rect x="872" y="384" fill="#5e5652" fill-opacity=".20"/><rect x="880" y="384" fill="#54545c" fill-opacity=".28"/><rect x="888" y="384" fill="#54545c" fill-opacity=".23"/><rect x="896" y="384" fill="#505058" fill-opacity=".16"/><rect x="904" y="384" fill="#5e5652" fill-opacity=".24"/><rect x="912" y="384" fill="#5e5652" fill-opacity=".26"/><rect x="920" y="384" fill="#5e5652" fill-opacity=".13"/><rect x="928" y="384" fill="#465468" fill-opacity=".08"/><rect x="936" y="384" fill="#5e5652" fill-opacity=".14"/><rect x="944" y="384" fill="#505058" fill-opacity=".08"/><rect x="952" y="384" fill="#5e5652" fill-opacity=".24"/><rect x="960" y="384" fill="#465468" fill-opacity=".09"/><rect x="968" y="384" fill="#54545c" fill-opacity=".14"/><rect x="976" y="384" fill="#505058" fill-opacity=".13"/><rect x="984" y="384" fill="#465468" fill-opacity=".15"/><rect x="992" y="384" fill="#505058" fill-opacity=".24"/><rect x="1000" y="384" fill="#54545c" fill-opacity=".16"/><rect x="1088" y="376" fill="#4a4f5e" fill-opacity=".16"/><rect x="1096" y="376" fill="#505058" fill-opacity=".17"/><rect x="1104" y="376" fill="#585460" fill-opacity=".25"/><rect x="1112" y="376" fill="#585460" fill-opacity=".24"/><rect x="1120" y="376" fill="#505058" fill-opacity=".26"/><rect x="1128" y="376" fill="#54545c" fill-opacity=".12"/><rect x="1136" y="376" fill="#5e5652" fill-opacity=".14"/><rect x="1144" y="376" fill="#585460" fill-opacity=".42"/><rect x="1152" y="376" fill="#5e5652" fill-opacity=".22"/><rect x="1160" y="376" fill="#5e5652" fill-opacity=".09"/><rect x="1088" y="384" fill="#585460" fill-opacity=".17"/><rect x="1096" y="384" fill="#4a4f5e" fill-opacity=".28"/><rect x="1104" y="384" fill="#585460" fill-opacity=".26"/><rect x="1112" y="384" fill="#465468" fill-opacity=".25"/><rect x="1120" y="384" fill="#5e5652" fill-opacity=".22"/><rect x="1128" y="384" fill="#465468" fill-opacity=".22"/><rect x="1136" y="384" fill="#585460" fill-opacity=".24"/><rect x="1144" y="384" fill="#465468" fill-opacity=".40"/><rect x="1152" y="384" fill="#465468" fill-opacity=".23"/><rect x="1160" y="384" fill="#4a4f5e" fill-opacity=".09"/><rect x="1176" y="360" fill="#54545c" fill-opacity=".30"/><rect x="1184" y="360" fill="#4a4f5e" fill-opacity=".26"/><rect x="1192" y="360" fill="#505058" fill-opacity=".20"/><rect x="1176" y="368" fill="#585460" fill-opacity=".08"/><rect x="1184" y="368" fill="#4a4f5e" fill-opacity=".07"/><rect x="848" y="408" fill="#5e5652" fill-opacity=".18"/><rect x="856" y="408" fill="#5e5652" fill-opacity=".25"/><rect x="864" y="408" fill="#585460" fill-opacity=".20"/><rect x="872" y="408" fill="#585460" fill-opacity=".26"/><rect x="880" y="408" fill="#54545c" fill-opacity=".28"/><rect x="888" y="408" fill="#585460" fill-opacity=".25"/><rect x="896" y="408" fill="#54545c" fill-opacity=".16"/><rect x="904" y="408" fill="#585460" fill-opacity=".24"/><rect x="912" y="408" fill="#54545c" fill-opacity=".24"/><rect x="920" y="408" fill="#54545c" fill-opacity=".11"/><rect x="928" y="408" fill="#585460" fill-opacity=".14"/><rect x="936" y="408" fill="#585460" fill-opacity=".23"/><rect x="944" y="408" fill="#54545c" fill-opacity=".25"/><rect x="952" y="408" fill="#54545c" fill-opacity=".26"/><rect x="960" y="408" fill="#4a4f5e" fill-opacity=".23"/><rect x="968" y="408" fill="#505058" fill-opacity=".19"/><rect x="976" y="408" fill="#54545c" fill-opacity=".27"/><rect x="984" y="408" fill="#585460" fill-opacity=".26"/><rect x="992" y="408" fill="#5e5652" fill-opacity=".23"/><rect x="1000" y="408" fill="#4a4f5e" fill-opacity=".20"/><rect x="848" y="416" fill="#465468" fill-opacity=".08"/><rect x="856" y="416" fill="#54545c" fill-opacity=".12"/><rect x="864" y="416" fill="#585460" fill-opacity=".07"/><rect x="872" y="416" fill="#505058" fill-opacity=".11"/><rect x="880" y="416" fill="#4a4f5e" fill-opacity=".11"/><rect x="888" y="416" fill="#5e5652" fill-opacity=".11"/><rect x="896" y="416" fill="#54545c" fill-opacity=".05"/><rect x="904" y="416" fill="#4a4f5e" fill-opacity=".10"/><rect x="912" y="416" fill="#5e5652" fill-opacity=".13"/><rect x="920" y="416" fill="#465468" fill-opacity=".06"/><rect x="928" y="416" fill="#585460" fill-opacity=".05"/><rect x="936" y="416" fill="#465468" fill-opacity=".11"/><rect x="944" y="416" fill="#54545c" fill-opacity=".09"/><rect x="952" y="416" fill="#5e5652" fill-opacity=".10"/><rect x="960" y="416" fill="#5e5652" fill-opacity=".12"/><rect x="968" y="416" fill="#54545c" fill-opacity=".12"/><rect x="976" y="416" fill="#465468" fill-opacity=".09"/><rect x="984" y="416" fill="#505058" fill-opacity=".11"/><rect x="992" y="416" fill="#505058" fill-opacity=".10"/><rect x="1000" y="416" fill="#465468" fill-opacity=".09"/><rect x="848" y="424" fill="#585460" fill-opacity=".12"/><rect x="856" y="424" fill="#5e5652" fill-opacity=".15"/><rect x="864" y="424" fill="#465468" fill-opacity=".12"/><rect x="872" y="424" fill="#585460" fill-opacity=".14"/><rect x="880" y="424" fill="#5e5652" fill-opacity=".19"/><rect x="888" y="424" fill="#585460" fill-opacity=".15"/><rect x="896" y="424" fill="#4a4f5e" fill-opacity=".13"/><rect x="904" y="424" fill="#5e5652" fill-opacity=".17"/><rect x="912" y="424" fill="#505058" fill-opacity=".16"/><rect x="920" y="424" fill="#585460" fill-opacity=".08"/><rect x="928" y="424" fill="#5e5652" fill-opacity=".11"/><rect x="936" y="424" fill="#585460" fill-opacity=".15"/><rect x="944" y="424" fill="#465468" fill-opacity=".10"/><rect x="952" y="424" fill="#505058" fill-opacity=".13"/><rect x="960" y="424" fill="#505058" fill-opacity=".15"/><rect x="968" y="424" fill="#585460" fill-opacity=".12"/><rect x="976" y="424" fill="#54545c" fill-opacity=".17"/><rect x="984" y="424" fill="#465468" fill-opacity=".18"/><rect x="992" y="424" fill="#585460" fill-opacity=".13"/><rect x="1000" y="424" fill="#585460" fill-opacity=".13"/><rect x="848" y="432" fill="#465468" fill-opacity=".10"/><rect x="856" y="432" fill="#505058" fill-opacity=".25"/><rect x="864" y="432" fill="#54545c" fill-opacity=".12"/><rect x="872" y="432" fill="#5e5652" fill-opacity=".20"/><rect x="880" y="432" fill="#54545c" fill-opacity=".28"/><rect x="888" y="432" fill="#54545c" fill-opacity=".23"/><rect x="896" y="432" fill="#505058" fill-opacity=".16"/><rect x="904" y="432" fill="#5e5652" fill-opacity=".24"/><rect x="912" y="432" fill="#5e5652" fill-opacity=".26"/><rect x="920" y="432" fill="#5e5652" fill-opacity=".13"/><rect x="928" y="432" fill="#465468" fill-opacity=".08"/><rect x="936" y="432" fill="#5e5652" fill-opacity=".14"/><rect x="944" y="432" fill="#505058" fill-opacity=".08"/><rect x="952" y="432" fill="#5e5652" fill-opacity=".24"/><rect x="960" y="432" fill="#465468" fill-opacity=".09"/><rect x="968" y="432" fill="#54545c" fill-opacity=".14"/><rect x="976" y="432" fill="#505058" fill-opacity=".13"/><rect x="984" y="432" fill="#465468" fill-opacity=".15"/><rect x="992" y="432" fill="#505058" fill-opacity=".24"/><rect x="1000" y="432" fill="#54545c" fill-opacity=".16"/><rect x="1088" y="424" fill="#4a4f5e" fill-opacity=".16"/><rect x="1096" y="424" fill="#505058" fill-opacity=".17"/><rect x="1104" y="424" fill="#585460" fill-opacity=".25"/><rect x="1112" y="424" fill="#585460" fill-opacity=".24"/><rect x="1120" y="424" fill="#505058" fill-opacity=".26"/><rect x="1128" y="424" fill="#54545c" fill-opacity=".12"/><rect x="1136" y="424" fill="#5e5652" fill-opacity=".14"/><rect x="1144" y="424" fill="#585460" fill-opacity=".42"/><rect x="1152" y="424" fill="#5e5652" fill-opacity=".22"/><rect x="1160" y="424" fill="#5e5652" fill-opacity=".09"/><rect x="1088" y="432" fill="#585460" fill-opacity=".17"/><rect x="1096" y="432" fill="#4a4f5e" fill-opacity=".28"/><rect x="1104" y="432" fill="#585460" fill-opacity=".26"/><rect x="1112" y="432" fill="#465468" fill-opacity=".25"/><rect x="1120" y="432" fill="#5e5652" fill-opacity=".22"/><rect x="1128" y="432" fill="#465468" fill-opacity=".22"/><rect x="1136" y="432" fill="#585460" fill-opacity=".24"/><rect x="1144" y="432" fill="#465468" fill-opacity=".40"/><rect x="1152" y="432" fill="#465468" fill-opacity=".23"/><rect x="1160" y="432" fill="#4a4f5e" fill-opacity=".09"/><rect x="1176" y="408" fill="#54545c" fill-opacity=".30"/><rect x="1184" y="408" fill="#4a4f5e" fill-opacity=".26"/><rect x="1192" y="408" fill="#505058" fill-opacity=".20"/><rect x="1176" y="416" fill="#585460" fill-opacity=".08"/><rect x="1184" y="416" fill="#4a4f5e" fill-opacity=".07"/><rect x="848" y="456" fill="#5e5652" fill-opacity=".18"/><rect x="856" y="456" fill="#5e5652" fill-opacity=".25"/><rect x="864" y="456" fill="#585460" fill-opacity=".20"/><rect x="872" y="456" fill="#585460" fill-opacity=".26"/><rect x="880" y="456" fill="#54545c" fill-opacity=".28"/><rect x="888" y="456" fill="#585460" fill-opacity=".25"/><rect x="896" y="456" fill="#54545c" fill-opacity=".16"/><rect x="904" y="456" fill="#585460" fill-opacity=".24"/><rect x="912" y="456" fill="#54545c" fill-opacity=".24"/><rect x="920" y="456" fill="#54545c" fill-opacity=".11"/><rect x="928" y="456" fill="#585460" fill-opacity=".14"/><rect x="936" y="456" fill="#585460" fill-opacity=".23"/><rect x="944" y="456" fill="#54545c" fill-opacity=".25"/><rect x="952" y="456" fill="#54545c" fill-opacity=".26"/><rect x="960" y="456" fill="#4a4f5e" fill-opacity=".23"/><rect x="968" y="456" fill="#505058" fill-opacity=".19"/><rect x="976" y="456" fill="#54545c" fill-opacity=".27"/><rect x="984" y="456" fill="#585460" fill-opacity=".26"/><rect x="992" y="456" fill="#5e5652" fill-opacity=".23"/><rect x="1000" y="456" fill="#4a4f5e" fill-opacity=".20"/><rect x="848" y="464" fill="#465468" fill-opacity=".08"/><rect x="856" y="464" fill="#54545c" fill-opacity=".12"/><rect x="864" y="464" fill="#585460" fill-opacity=".07"/><rect x="872" y="464" fill="#505058" fill-opacity=".11"/><rect x="880" y="464" fill="#4a4f5e" fill-opacity=".11"/><rect x="888" y="464" fill="#5e5652" fill-opacity=".11"/><rect x="896" y="464" fill="#54545c" fill-opacity=".05"/><rect x="904" y="464" fill="#4a4f5e" fill-opacity=".10"/><rect x="912" y="464" fill="#5e5652" fill-opacity=".13"/><rect x="920" y="464" fill="#465468" fill-opacity=".06"/><rect x="928" y="464" fill="#585460" fill-opacity=".05"/><rect x="936" y="464" fill="#465468" fill-opacity=".11"/><rect x="944" y="464" fill="#54545c" fill-opacity=".09"/><rect x="952" y="464" fill="#5e5652" fill-opacity=".10"/><rect x="960" y="464" fill="#5e5652" fill-opacity=".12"/><rect x="968" y="464" fill="#54545c" fill-opacity=".12"/><rect x="976" y="464" fill="#465468" fill-opacity=".09"/><rect x="984" y="464" fill="#505058" fill-opacity=".11"/><rect x="992" y="464" fill="#505058" fill-opacity=".10"/><rect x="1000" y="464" fill="#465468" fill-opacity=".09"/><rect x="848" y="472" fill="#585460" fill-opacity=".12"/><rect x="856" y="472" fill="#5e5652" fill-opacity=".15"/><rect x="864" y="472" fill="#465468" fill-opacity=".12"/><rect x="872" y="472" fill="#585460" fill-opacity=".14"/><rect x="880" y="472" fill="#5e5652" fill-opacity=".19"/><rect x="888" y="472" fill="#585460" fill-opacity=".15"/><rect x="896" y="472" fill="#4a4f5e" fill-opacity=".13"/><rect x="904" y="472" fill="#5e5652" fill-opacity=".17"/><rect x="912" y="472" fill="#505058" fill-opacity=".16"/><rect x="920" y="472" fill="#585460" fill-opacity=".08"/><rect x="928" y="472" fill="#5e5652" fill-opacity=".11"/><rect x="936" y="472" fill="#585460" fill-opacity=".15"/><rect x="944" y="472" fill="#465468" fill-opacity=".10"/><rect x="952" y="472" fill="#505058" fill-opacity=".13"/><rect x="960" y="472" fill="#505058" fill-opacity=".15"/><rect x="968" y="472" fill="#585460" fill-opacity=".12"/><rect x="976" y="472" fill="#54545c" fill-opacity=".17"/><rect x="984" y="472" fill="#465468" fill-opacity=".18"/><rect x="992" y="472" fill="#585460" fill-opacity=".13"/><rect x="1000" y="472" fill="#585460" fill-opacity=".13"/><rect x="848" y="480" fill="#465468" fill-opacity=".10"/><rect x="856" y="480" fill="#505058" fill-opacity=".25"/><rect x="864" y="480" fill="#54545c" fill-opacity=".12"/><rect x="872" y="480" fill="#5e5652" fill-opacity=".20"/><rect x="880" y="480" fill="#54545c" fill-opacity=".28"/><rect x="888" y="480" fill="#54545c" fill-opacity=".23"/><rect x="896" y="480" fill="#505058" fill-opacity=".16"/><rect x="904" y="480" fill="#5e5652" fill-opacity=".24"/><rect x="912" y="480" fill="#5e5652" fill-opacity=".26"/><rect x="920" y="480" fill="#5e5652" fill-opacity=".13"/><rect x="928" y="480" fill="#465468" fill-opacity=".08"/><rect x="936" y="480" fill="#5e5652" fill-opacity=".14"/><rect x="944" y="480" fill="#505058" fill-opacity=".08"/><rect x="952" y="480" fill="#5e5652" fill-opacity=".24"/><rect x="960" y="480" fill="#465468" fill-opacity=".09"/><rect x="968" y="480" fill="#54545c" fill-opacity=".14"/><rect x="976" y="480" fill="#505058" fill-opacity=".13"/><rect x="984" y="480" fill="#465468" fill-opacity=".15"/><rect x="992" y="480" fill="#505058" fill-opacity=".24"/><rect x="1000" y="480" fill="#54545c" fill-opacity=".16"/><rect x="1088" y="472" fill="#4a4f5e" fill-opacity=".16"/><rect x="1096" y="472" fill="#505058" fill-opacity=".17"/><rect x="1104" y="472" fill="#585460" fill-opacity=".25"/><rect x="1112" y="472" fill="#585460" fill-opacity=".24"/><rect x="1120" y="472" fill="#505058" fill-opacity=".26"/><rect x="1128" y="472" fill="#54545c" fill-opacity=".12"/><rect x="1136" y="472" fill="#5e5652" fill-opacity=".14"/><rect x="1144" y="472" fill="#585460" fill-opacity=".42"/><rect x="1152" y="472" fill="#5e5652" fill-opacity=".22"/><rect x="1160" y="472" fill="#5e5652" fill-opacity=".09"/><rect x="1088" y="480" fill="#585460" fill-opacity=".17"/><rect x="1096" y="480" fill="#4a4f5e" fill-opacity=".28"/><rect x="1104" y="480" fill="#585460" fill-opacity=".26"/><rect x="1112" y="480" fill="#465468" fill-opacity=".25"/><rect x="1120" y="480" fill="#5e5652" fill-opacity=".22"/><rect x="1128" y="480" fill="#465468" fill-opacity=".22"/><rect x="1136" y="480" fill="#585460" fill-opacity=".24"/><rect x="1144" y="480" fill="#465468" fill-opacity=".40"/><rect x="1152" y="480" fill="#465468" fill-opacity=".23"/><rect x="1160" y="480" fill="#4a4f5e" fill-opacity=".09"/><rect x="1176" y="456" fill="#54545c" fill-opacity=".30"/><rect x="1184" y="456" fill="#4a4f5e" fill-opacity=".26"/><rect x="1192" y="456" fill="#505058" fill-opacity=".20"/><rect x="1176" y="464" fill="#585460" fill-opacity=".08"/><rect x="1184" y="464" fill="#4a4f5e" fill-opacity=".07"/><rect x="848" y="504" fill="#5e5652" fill-opacity=".18"/><rect x="856" y="504" fill="#5e5652" fill-opacity=".25"/><rect x="864" y="504" fill="#585460" fill-opacity=".20"/><rect x="872" y="504" fill="#585460" fill-opacity=".26"/><rect x="880" y="504" fill="#54545c" fill-opacity=".28"/><rect x="888" y="504" fill="#585460" fill-opacity=".25"/><rect x="896" y="504" fill="#54545c" fill-opacity=".16"/><rect x="904" y="504" fill="#585460" fill-opacity=".24"/><rect x="912" y="504" fill="#54545c" fill-opacity=".24"/><rect x="920" y="504" fill="#54545c" fill-opacity=".11"/><rect x="928" y="504" fill="#585460" fill-opacity=".14"/><rect x="936" y="504" fill="#585460" fill-opacity=".23"/><rect x="944" y="504" fill="#54545c" fill-opacity=".25"/><rect x="952" y="504" fill="#54545c" fill-opacity=".26"/><rect x="960" y="504" fill="#4a4f5e" fill-opacity=".23"/><rect x="968" y="504" fill="#505058" fill-opacity=".19"/><rect x="976" y="504" fill="#54545c" fill-opacity=".27"/><rect x="984" y="504" fill="#585460" fill-opacity=".26"/><rect x="992" y="504" fill="#5e5652" fill-opacity=".23"/><rect x="1000" y="504" fill="#4a4f5e" fill-opacity=".20"/><rect x="848" y="512" fill="#465468" fill-opacity=".08"/><rect x="856" y="512" fill="#54545c" fill-opacity=".12"/><rect x="864" y="512" fill="#585460" fill-opacity=".07"/><rect x="872" y="512" fill="#505058" fill-opacity=".11"/><rect x="880" y="512" fill="#4a4f5e" fill-opacity=".11"/><rect x="888" y="512" fill="#5e5652" fill-opacity=".11"/><rect x="896" y="512" fill="#54545c" fill-opacity=".05"/><rect x="904" y="512" fill="#4a4f5e" fill-opacity=".10"/><rect x="912" y="512" fill="#5e5652" fill-opacity=".13"/><rect x="920" y="512" fill="#465468" fill-opacity=".06"/><rect x="928" y="512" fill="#585460" fill-opacity=".05"/><rect x="936" y="512" fill="#465468" fill-opacity=".11"/><rect x="944" y="512" fill="#54545c" fill-opacity=".09"/><rect x="952" y="512" fill="#5e5652" fill-opacity=".10"/><rect x="960" y="512" fill="#5e5652" fill-opacity=".12"/><rect x="968" y="512" fill="#54545c" fill-opacity=".12"/><rect x="976" y="512" fill="#465468" fill-opacity=".09"/><rect x="984" y="512" fill="#505058" fill-opacity=".11"/><rect x="992" y="512" fill="#505058" fill-opacity=".10"/><rect x="1000" y="512" fill="#465468" fill-opacity=".09"/><rect x="848" y="520" fill="#585460" fill-opacity=".12"/><rect x="856" y="520" fill="#5e5652" fill-opacity=".15"/><rect x="864" y="520" fill="#465468" fill-opacity=".12"/><rect x="872" y="520" fill="#585460" fill-opacity=".14"/><rect x="880" y="520" fill="#5e5652" fill-opacity=".19"/><rect x="888" y="520" fill="#585460" fill-opacity=".15"/><rect x="896" y="520" fill="#4a4f5e" fill-opacity=".13"/><rect x="904" y="520" fill="#5e5652" fill-opacity=".17"/><rect x="912" y="520" fill="#505058" fill-opacity=".16"/><rect x="920" y="520" fill="#585460" fill-opacity=".08"/><rect x="928" y="520" fill="#5e5652" fill-opacity=".11"/><rect x="936" y="520" fill="#585460" fill-opacity=".15"/><rect x="944" y="520" fill="#465468" fill-opacity=".10"/><rect x="952" y="520" fill="#505058" fill-opacity=".13"/><rect x="960" y="520" fill="#505058" fill-opacity=".15"/><rect x="968" y="520" fill="#585460" fill-opacity=".12"/><rect x="976" y="520" fill="#54545c" fill-opacity=".17"/><rect x="984" y="520" fill="#465468" fill-opacity=".18"/><rect x="992" y="520" fill="#585460" fill-opacity=".13"/><rect x="1000" y="520" fill="#585460" fill-opacity=".13"/><rect x="848" y="528" fill="#465468" fill-opacity=".10"/><rect x="856" y="528" fill="#505058" fill-opacity=".25"/><rect x="864" y="528" fill="#54545c" fill-opacity=".12"/><rect x="872" y="528" fill="#5e5652" fill-opacity=".20"/><rect x="880" y="528" fill="#54545c" fill-opacity=".28"/><rect x="888" y="528" fill="#54545c" fill-opacity=".23"/><rect x="896" y="528" fill="#505058" fill-opacity=".16"/><rect x="904" y="528" fill="#5e5652" fill-opacity=".24"/><rect x="912" y="528" fill="#5e5652" fill-opacity=".26"/><rect x="920" y="528" fill="#5e5652" fill-opacity=".13"/><rect x="928" y="528" fill="#465468" fill-opacity=".08"/><rect x="936" y="528" fill="#5e5652" fill-opacity=".14"/><rect x="944" y="528" fill="#505058" fill-opacity=".08"/><rect x="952" y="528" fill="#5e5652" fill-opacity=".24"/><rect x="960" y="528" fill="#465468" fill-opacity=".09"/><rect x="968" y="528" fill="#54545c" fill-opacity=".14"/><rect x="976" y="528" fill="#505058" fill-opacity=".13"/><rect x="984" y="528" fill="#465468" fill-opacity=".15"/><rect x="992" y="528" fill="#505058" fill-opacity=".24"/><rect x="1000" y="528" fill="#54545c" fill-opacity=".16"/><rect x="1088" y="520" fill="#4a4f5e" fill-opacity=".16"/><rect x="1096" y="520" fill="#505058" fill-opacity=".17"/><rect x="1104" y="520" fill="#585460" fill-opacity=".25"/><rect x="1112" y="520" fill="#585460" fill-opacity=".24"/><rect x="1120" y="520" fill="#505058" fill-opacity=".26"/><rect x="1128" y="520" fill="#54545c" fill-opacity=".12"/><rect x="1136" y="520" fill="#5e5652" fill-opacity=".14"/><rect x="1144" y="520" fill="#585460" fill-opacity=".42"/><rect x="1152" y="520" fill="#5e5652" fill-opacity=".22"/><rect x="1160" y="520" fill="#5e5652" fill-opacity=".09"/><rect x="1088" y="528" fill="#585460" fill-opacity=".17"/><rect x="1096" y="528" fill="#4a4f5e" fill-opacity=".28"/><rect x="1104" y="528" fill="#585460" fill-opacity=".26"/><rect x="1112" y="528" fill="#465468" fill-opacity=".25"/><rect x="1120" y="528" fill="#5e5652" fill-opacity=".22"/><rect x="1128" y="528" fill="#465468" fill-opacity=".22"/><rect x="1136" y="528" fill="#585460" fill-opacity=".24"/><rect x="1144" y="528" fill="#465468" fill-opacity=".40"/><rect x="1152" y="528" fill="#465468" fill-opacity=".23"/><rect x="1160" y="528" fill="#4a4f5e" fill-opacity=".09"/><rect x="1176" y="504" fill="#54545c" fill-opacity=".30"/><rect x="1184" y="504" fill="#4a4f5e" fill-opacity=".26"/><rect x="1192" y="504" fill="#505058" fill-opacity=".20"/><rect x="1176" y="512" fill="#585460" fill-opacity=".08"/><rect x="1184" y="512" fill="#4a4f5e" fill-opacity=".07"/><rect x="848" y="552" fill="#5e5652" fill-opacity=".18"/><rect x="856" y="552" fill="#5e5652" fill-opacity=".25"/><rect x="864" y="552" fill="#585460" fill-opacity=".20"/><rect x="872" y="552" fill="#585460" fill-opacity=".26"/><rect x="880" y="552" fill="#54545c" fill-opacity=".28"/><rect x="888" y="552" fill="#585460" fill-opacity=".25"/><rect x="896" y="552" fill="#54545c" fill-opacity=".16"/><rect x="904" y="552" fill="#585460" fill-opacity=".24"/><rect x="912" y="552" fill="#54545c" fill-opacity=".24"/><rect x="920" y="552" fill="#54545c" fill-opacity=".11"/><rect x="928" y="552" fill="#585460" fill-opacity=".14"/><rect x="936" y="552" fill="#585460" fill-opacity=".23"/><rect x="944" y="552" fill="#54545c" fill-opacity=".25"/><rect x="952" y="552" fill="#54545c" fill-opacity=".26"/><rect x="960" y="552" fill="#4a4f5e" fill-opacity=".23"/><rect x="968" y="552" fill="#505058" fill-opacity=".19"/><rect x="976" y="552" fill="#54545c" fill-opacity=".27"/><rect x="984" y="552" fill="#585460" fill-opacity=".26"/><rect x="992" y="552" fill="#5e5652" fill-opacity=".23"/><rect x="1000" y="552" fill="#4a4f5e" fill-opacity=".20"/><rect x="848" y="560" fill="#465468" fill-opacity=".08"/><rect x="856" y="560" fill="#54545c" fill-opacity=".12"/><rect x="864" y="560" fill="#585460" fill-opacity=".07"/><rect x="872" y="560" fill="#505058" fill-opacity=".11"/><rect x="880" y="560" fill="#4a4f5e" fill-opacity=".11"/><rect x="888" y="560" fill="#5e5652" fill-opacity=".11"/><rect x="896" y="560" fill="#54545c" fill-opacity=".05"/><rect x="904" y="560" fill="#4a4f5e" fill-opacity=".10"/><rect x="912" y="560" fill="#5e5652" fill-opacity=".13"/><rect x="920" y="560" fill="#465468" fill-opacity=".06"/><rect x="928" y="560" fill="#585460" fill-opacity=".05"/><rect x="936" y="560" fill="#465468" fill-opacity=".11"/><rect x="944" y="560" fill="#54545c" fill-opacity=".09"/><rect x="952" y="560" fill="#5e5652" fill-opacity=".10"/><rect x="960" y="560" fill="#5e5652" fill-opacity=".12"/><rect x="968" y="560" fill="#54545c" fill-opacity=".12"/><rect x="976" y="560" fill="#465468" fill-opacity=".09"/><rect x="984" y="560" fill="#505058" fill-opacity=".11"/><rect x="992" y="560" fill="#505058" fill-opacity=".10"/><rect x="1000" y="560" fill="#465468" fill-opacity=".09"/><rect x="848" y="568" fill="#585460" fill-opacity=".12"/><rect x="856" y="568" fill="#5e5652" fill-opacity=".15"/><rect x="864" y="568" fill="#465468" fill-opacity=".12"/><rect x="872" y="568" fill="#585460" fill-opacity=".14"/><rect x="880" y="568" fill="#5e5652" fill-opacity=".19"/><rect x="888" y="568" fill="#585460" fill-opacity=".15"/><rect x="896" y="568" fill="#4a4f5e" fill-opacity=".13"/><rect x="904" y="568" fill="#5e5652" fill-opacity=".17"/><rect x="912" y="568" fill="#505058" fill-opacity=".16"/><rect x="920" y="568" fill="#585460" fill-opacity=".08"/><rect x="928" y="568" fill="#5e5652" fill-opacity=".11"/><rect x="936" y="568" fill="#585460" fill-opacity=".15"/><rect x="944" y="568" fill="#465468" fill-opacity=".10"/><rect x="952" y="568" fill="#505058" fill-opacity=".13"/><rect x="960" y="568" fill="#505058" fill-opacity=".15"/><rect x="968" y="568" fill="#585460" fill-opacity=".12"/><rect x="976" y="568" fill="#54545c" fill-opacity=".17"/><rect x="984" y="568" fill="#465468" fill-opacity=".18"/><rect x="992" y="568" fill="#585460" fill-opacity=".13"/><rect x="1000" y="568" fill="#585460" fill-opacity=".13"/><rect x="848" y="576" fill="#465468" fill-opacity=".10"/><rect x="856" y="576" fill="#505058" fill-opacity=".25"/><rect x="864" y="576" fill="#54545c" fill-opacity=".12"/><rect x="872" y="576" fill="#5e5652" fill-opacity=".20"/><rect x="880" y="576" fill="#54545c" fill-opacity=".28"/><rect x="888" y="576" fill="#54545c" fill-opacity=".23"/><rect x="896" y="576" fill="#505058" fill-opacity=".16"/><rect x="904" y="576" fill="#5e5652" fill-opacity=".24"/><rect x="912" y="576" fill="#5e5652" fill-opacity=".26"/><rect x="920" y="576" fill="#5e5652" fill-opacity=".13"/><rect x="928" y="576" fill="#465468" fill-opacity=".08"/><rect x="936" y="576" fill="#5e5652" fill-opacity=".14"/><rect x="944" y="576" fill="#505058" fill-opacity=".08"/><rect x="952" y="576" fill="#5e5652" fill-opacity=".24"/><rect x="960" y="576" fill="#465468" fill-opacity=".09"/><rect x="968" y="576" fill="#54545c" fill-opacity=".14"/><rect x="976" y="576" fill="#505058" fill-opacity=".13"/><rect x="984" y="576" fill="#465468" fill-opacity=".15"/><rect x="992" y="576" fill="#505058" fill-opacity=".24"/><rect x="1000" y="576" fill="#54545c" fill-opacity=".16"/><rect x="1088" y="568" fill="#4a4f5e" fill-opacity=".16"/><rect x="1096" y="568" fill="#505058" fill-opacity=".17"/><rect x="1104" y="568" fill="#585460" fill-opacity=".25"/><rect x="1112" y="568" fill="#585460" fill-opacity=".24"/><rect x="1120" y="568" fill="#505058" fill-opacity=".26"/><rect x="1128" y="568" fill="#54545c" fill-opacity=".12"/><rect x="1136" y="568" fill="#5e5652" fill-opacity=".14"/><rect x="1144" y="568" fill="#585460" fill-opacity=".42"/><rect x="1152" y="568" fill="#5e5652" fill-opacity=".22"/><rect x="1160" y="568" fill="#5e5652" fill-opacity=".09"/><rect x="1088" y="576" fill="#585460" fill-opacity=".17"/><rect x="1096" y="576" fill="#4a4f5e" fill-opacity=".28"/><rect x="1104" y="576" fill="#585460" fill-opacity=".26"/><rect x="1112" y="576" fill="#465468" fill-opacity=".25"/><rect x="1120" y="576" fill="#5e5652" fill-opacity=".22"/><rect x="1128" y="576" fill="#465468" fill-opacity=".22"/><rect x="1136" y="576" fill="#585460" fill-opacity=".24"/><rect x="1144" y="576" fill="#465468" fill-opacity=".40"/><rect x="1152" y="576" fill="#465468" fill-opacity=".23"/><rect x="1160" y="576" fill="#4a4f5e" fill-opacity=".09"/><rect x="1176" y="552" fill="#54545c" fill-opacity=".30"/><rect x="1184" y="552" fill="#4a4f5e" fill-opacity=".26"/><rect x="1192" y="552" fill="#505058" fill-opacity=".20"/><rect x="1176" y="560" fill="#585460" fill-opacity=".08"/><rect x="1184" y="560" fill="#4a4f5e" fill-opacity=".07"/><rect x="848" y="600" fill="#5e5652" fill-opacity=".18"/><rect x="856" y="600" fill="#5e5652" fill-opacity=".25"/><rect x="864" y="600" fill="#585460" fill-opacity=".20"/><rect x="872" y="600" fill="#585460" fill-opacity=".26"/><rect x="880" y="600" fill="#54545c" fill-opacity=".28"/><rect x="888" y="600" fill="#585460" fill-opacity=".25"/><rect x="896" y="600" fill="#54545c" fill-opacity=".16"/><rect x="904" y="600" fill="#585460" fill-opacity=".24"/><rect x="912" y="600" fill="#54545c" fill-opacity=".24"/><rect x="920" y="600" fill="#54545c" fill-opacity=".11"/><rect x="928" y="600" fill="#585460" fill-opacity=".14"/><rect x="936" y="600" fill="#585460" fill-opacity=".23"/><rect x="944" y="600" fill="#54545c" fill-opacity=".25"/><rect x="952" y="600" fill="#54545c" fill-opacity=".26"/><rect x="960" y="600" fill="#4a4f5e" fill-opacity=".23"/><rect x="968" y="600" fill="#505058" fill-opacity=".19"/><rect x="976" y="600" fill="#54545c" fill-opacity=".27"/><rect x="984" y="600" fill="#585460" fill-opacity=".26"/><rect x="992" y="600" fill="#5e5652" fill-opacity=".23"/><rect x="1000" y="600" fill="#4a4f5e" fill-opacity=".20"/><rect x="848" y="608" fill="#465468" fill-opacity=".08"/><rect x="856" y="608" fill="#54545c" fill-opacity=".12"/><rect x="864" y="608" fill="#585460" fill-opacity=".07"/><rect x="872" y="608" fill="#505058" fill-opacity=".11"/><rect x="880" y="608" fill="#4a4f5e" fill-opacity=".11"/><rect x="888" y="608" fill="#5e5652" fill-opacity=".11"/><rect x="896" y="608" fill="#54545c" fill-opacity=".05"/><rect x="904" y="608" fill="#4a4f5e" fill-opacity=".10"/><rect x="912" y="608" fill="#5e5652" fill-opacity=".13"/><rect x="920" y="608" fill="#465468" fill-opacity=".06"/><rect x="928" y="608" fill="#585460" fill-opacity=".05"/><rect x="936" y="608" fill="#465468" fill-opacity=".11"/><rect x="944" y="608" fill="#54545c" fill-opacity=".09"/><rect x="952" y="608" fill="#5e5652" fill-opacity=".10"/><rect x="960" y="608" fill="#5e5652" fill-opacity=".12"/><rect x="968" y="608" fill="#54545c" fill-opacity=".12"/><rect x="976" y="608" fill="#465468" fill-opacity=".09"/><rect x="984" y="608" fill="#505058" fill-opacity=".11"/><rect x="992" y="608" fill="#505058" fill-opacity=".10"/><rect x="1000" y="608" fill="#465468" fill-opacity=".09"/><rect x="848" y="616" fill="#585460" fill-opacity=".12"/><rect x="856" y="616" fill="#5e5652" fill-opacity=".15"/><rect x="864" y="616" fill="#465468" fill-opacity=".12"/><rect x="872" y="616" fill="#585460" fill-opacity=".14"/><rect x="880" y="616" fill="#5e5652" fill-opacity=".19"/><rect x="888" y="616" fill="#585460" fill-opacity=".15"/><rect x="896" y="616" fill="#4a4f5e" fill-opacity=".13"/><rect x="904" y="616" fill="#5e5652" fill-opacity=".17"/><rect x="912" y="616" fill="#505058" fill-opacity=".16"/><rect x="920" y="616" fill="#585460" fill-opacity=".08"/><rect x="928" y="616" fill="#5e5652" fill-opacity=".11"/><rect x="936" y="616" fill="#585460" fill-opacity=".15"/><rect x="944" y="616" fill="#465468" fill-opacity=".10"/><rect x="952" y="616" fill="#505058" fill-opacity=".13"/><rect x="960" y="616" fill="#505058" fill-opacity=".15"/><rect x="968" y="616" fill="#585460" fill-opacity=".12"/><rect x="976" y="616" fill="#54545c" fill-opacity=".17"/><rect x="984" y="616" fill="#465468" fill-opacity=".18"/><rect x="992" y="616" fill="#585460" fill-opacity=".13"/><rect x="1000" y="616" fill="#585460" fill-opacity=".13"/><rect x="848" y="624" fill="#465468" fill-opacity=".10"/><rect x="856" y="624" fill="#505058" fill-opacity=".25"/><rect x="864" y="624" fill="#54545c" fill-opacity=".12"/><rect x="872" y="624" fill="#5e5652" fill-opacity=".20"/><rect x="880" y="624" fill="#54545c" fill-opacity=".28"/><rect x="888" y="624" fill="#54545c" fill-opacity=".23"/><rect x="896" y="624" fill="#505058" fill-opacity=".16"/><rect x="904" y="624" fill="#5e5652" fill-opacity=".24"/><rect x="912" y="624" fill="#5e5652" fill-opacity=".26"/><rect x="920" y="624" fill="#5e5652" fill-opacity=".13"/><rect x="928" y="624" fill="#465468" fill-opacity=".08"/><rect x="936" y="624" fill="#5e5652" fill-opacity=".14"/><rect x="944" y="624" fill="#505058" fill-opacity=".08"/><rect x="952" y="624" fill="#5e5652" fill-opacity=".24"/><rect x="960" y="624" fill="#465468" fill-opacity=".09"/><rect x="968" y="624" fill="#54545c" fill-opacity=".14"/><rect x="976" y="624" fill="#505058" fill-opacity=".13"/><rect x="984" y="624" fill="#465468" fill-opacity=".15"/><rect x="992" y="624" fill="#505058" fill-opacity=".24"/><rect x="1000" y="624" fill="#54545c" fill-opacity=".16"/><rect x="1088" y="616" fill="#4a4f5e" fill-opacity=".16"/><rect x="1096" y="616" fill="#505058" fill-opacity=".17"/><rect x="1104" y="616" fill="#585460" fill-opacity=".25"/><rect x="1112" y="616" fill="#585460" fill-opacity=".24"/><rect x="1120" y="616" fill="#505058" fill-opacity=".26"/><rect x="1128" y="616" fill="#54545c" fill-opacity=".12"/><rect x="1136" y="616" fill="#5e5652" fill-opacity=".14"/><rect x="1144" y="616" fill="#585460" fill-opacity=".42"/><rect x="1152" y="616" fill="#5e5652" fill-opacity=".22"/><rect x="1160" y="616" fill="#5e5652" fill-opacity=".09"/><rect x="1088" y="624" fill="#585460" fill-opacity=".17"/><rect x="1096" y="624" fill="#4a4f5e" fill-opacity=".28"/><rect x="1104" y="624" fill="#585460" fill-opacity=".26"/><rect x="1112" y="624" fill="#465468" fill-opacity=".25"/><rect x="1120" y="624" fill="#5e5652" fill-opacity=".22"/><rect x="1128" y="624" fill="#465468" fill-opacity=".22"/><rect x="1136" y="624" fill="#585460" fill-opacity=".24"/><rect x="1144" y="624" fill="#465468" fill-opacity=".40"/><rect x="1152" y="624" fill="#465468" fill-opacity=".23"/><rect x="1160" y="624" fill="#4a4f5e" fill-opacity=".09"/><rect x="1176" y="600" fill="#54545c" fill-opacity=".30"/><rect x="1184" y="600" fill="#4a4f5e" fill-opacity=".26"/><rect x="1192" y="600" fill="#505058" fill-opacity=".20"/><rect x="1176" y="608" fill="#585460" fill-opacity=".08"/><rect x="1184" y="608" fill="#4a4f5e" fill-opacity=".07"/><rect x="256" y="80" fill="#f3f3f3"/><rect x="264" y="80" fill="#d5d7dc"/><rect x="272" y="80" fill="#efeeec"/><rect x="280" y="80" fill="#d3d5db"/><rect x="288" y="80" fill="#d3d3d3"/><rect x="296" y="80" fill="#5e5652" fill-opacity=".12"/><rect x="256" y="88" fill="#e4e3e1"/><rect x="264" y="88" fill="#b0b4bc"/><rect x="272" y="88" fill="#d8d4d1"/><rect x="280" y="88" fill="#ccd3dc"/><rect x="288" y="88" fill="#8a8a8c"/><rect x="296" y="88" fill="#9b9ea6"/><rect x="288" y="96" fill="#465468" fill-opacity=".03"/><rect x="296" y="96" fill="#465468" fill-opacity=".03"/></svg>
<div class="pg" style="left:478px;width:48px;line-height:32px">共 59 条</div>
<div class="pg pi" style="left:537px"><svg width="8" height="12" viewBox="0 0 8 12" style="vertical-align:-2px;margin-left:2px"><path d="M6.6 1.6 L1.8 6.1 L6.6 10.6" fill="none" stroke="#ccc" stroke-width="1.1"/></svg></div>
<div class="pg pi on" style="left:580px">1</div>
<div class="pg pi" style="left:619px">2</div>
<div class="pg pi" style="left:658px">3</div>
<div class="pg pi" style="left:697px;color:#ccc;letter-spacing:0"><svg width="14" height="4" viewBox="0 0 14 4" style="vertical-align:3px"><circle cx="2" cy="2" r="1.6" fill="#ccc"/><circle cx="7" cy="2" r="1.6" fill="#ccc"/><circle cx="12" cy="2" r="1.6" fill="#ccc"/></svg></div>
<div class="pg pi" style="left:736px">6</div>
<div class="pg pi" style="left:779px"><svg width="8" height="12" viewBox="0 0 8 12" style="vertical-align:-2px;margin-left:1px"><path d="M1.4 1.3 L6.4 6 L1.4 10.7" fill="none" stroke="#666" stroke-width="1.05"/></svg></div>
<div class="pg pi" style="left:829px;width:78px;text-align:left;padding-left:8px">10 条/页<span style="position:absolute;left:59px;top:12px;width:0;height:0;border-left:4.6px solid transparent;border-right:4.6px solid transparent;border-top:5.4px solid #80848f"></span></div>
</body>
</html>
